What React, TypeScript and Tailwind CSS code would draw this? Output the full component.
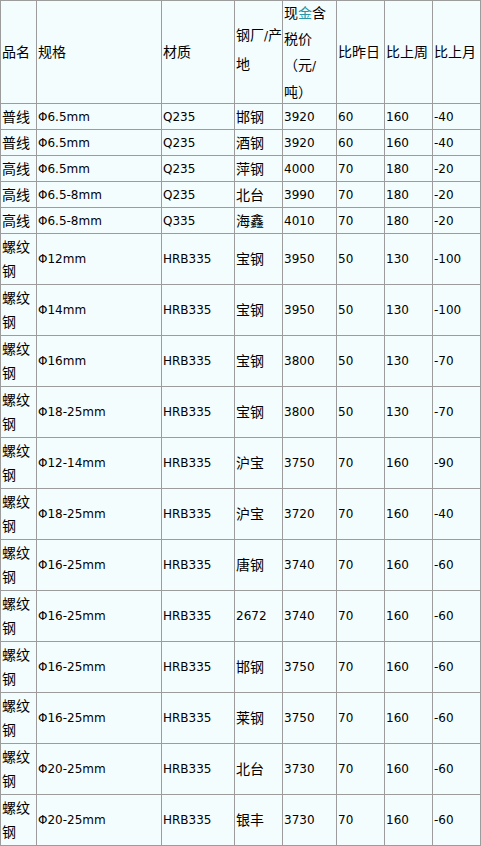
import React from "react";

type Row = string[];

const rows: Row[] = [
  ["普线", "Φ6.5mm", "Q235", "邯钢", "3920", "60", "160", "-40"],
  ["普线", "Φ6.5mm", "Q235", "酒钢", "3920", "60", "160", "-40"],
  ["高线", "Φ6.5mm", "Q235", "萍钢", "4000", "70", "180", "-20"],
  ["高线", "Φ6.5-8mm", "Q235", "北台", "3990", "70", "180", "-20"],
  ["高线", "Φ6.5-8mm", "Q335", "海鑫", "4010", "70", "180", "-20"],
];

const tall: Row[] = [
  ["Φ12mm", "HRB335", "宝钢", "3950", "50", "130", "-100"],
  ["Φ14mm", "HRB335", "宝钢", "3950", "50", "130", "-100"],
  ["Φ16mm", "HRB335", "宝钢", "3800", "50", "130", "-70"],
  ["Φ18-25mm", "HRB335", "宝钢", "3800", "50", "130", "-70"],
  ["Φ12-14mm", "HRB335", "沪宝", "3750", "70", "160", "-90"],
  ["Φ18-25mm", "HRB335", "沪宝", "3720", "70", "160", "-40"],
  ["Φ16-25mm", "HRB335", "唐钢", "3740", "70", "160", "-60"],
  ["Φ16-25mm", "HRB335", "2672", "3740", "70", "160", "-60"],
  ["Φ16-25mm", "HRB335", "邯钢", "3750", "70", "160", "-60"],
  ["Φ16-25mm", "HRB335", "莱钢", "3750", "70", "160", "-60"],
  ["Φ20-25mm", "HRB335", "北台", "3730", "70", "160", "-60"],
  ["Φ20-25mm", "HRB335", "银丰", "3730", "70", "160", "-60"],
];

const cjk = /[\u3000-\u9fff\uff00-\uffef]/;

function T({ s }: { s: string }) {
  const parts: { t: string; c: boolean }[] = [];
  for (const ch of s) {
    const c = cjk.test(ch);
    const last = parts[parts.length - 1];
    if (last && last.c === c) last.t += ch;
    else parts.push({ t: ch, c });
  }
  return (
    <>
      {parts.map((p, i) =>
        p.c ? (
          <span key={i} className="text-[14px]">
            {p.t}
          </span>
        ) : (
          <span key={i} className="text-[12px]">
            {p.t}
          </span>
        )
      )}
    </>
  );
}

const cell =
  "border-r border-b border-[#9c9c9c] flex items-center pl-[1px] overflow-hidden whitespace-nowrap";

export default function App() {
  return (
    <div
      className="w-[481px] bg-[#f4fdfd] text-black"
      style={{ fontFamily: '"DejaVu Sans", "Noto Sans CJK SC", sans-serif' }}
    >
      <div className="grid grid-cols-[36px_125px_73px_48px_54px_48px_48px_48px] border-l border-t border-[#9c9c9c]">
        {/* header */}
        <div className={`${cell} h-[103px] leading-[24px]`}>
          <T s="品名" />
        </div>
        <div className={`${cell} h-[103px] leading-[24px]`}>
          <T s="规格" />
        </div>
        <div className={`${cell} h-[103px] leading-[24px]`}>
          <T s="材质" />
        </div>
        <div className={`${cell} h-[103px] leading-[28px] pb-[6px]`}>
          <div>
            <div>
              <T s="钢厂/产" />
            </div>
            <div>
              <T s="地" />
            </div>
          </div>
        </div>
        <div className={`${cell} h-[103px] leading-[25px]`}>
          <div>
            <div>
              <span className="text-[14px]">现</span>
              <span className="text-[14px] text-[#2b96a8]">金</span>
              <span className="text-[14px]">含</span>
            </div>
            <div>
              <T s="税价" />
            </div>
            <div>
              <T s="（元/" />
            </div>
            <div>
              <T s="吨）" />
            </div>
          </div>
        </div>
        <div className={`${cell} h-[103px] leading-[24px]`}>
          <T s="比昨日" />
        </div>
        <div className={`${cell} h-[103px] leading-[24px]`}>
          <T s="比上周" />
        </div>
        <div className={`${cell} h-[103px] leading-[24px]`}>
          <T s="比上月" />
        </div>

        {rows.map((r, i) => (
          <React.Fragment key={`r${i}`}>
            {r.map((v, j) => (
              <div key={j} className={`${cell} h-[26px] leading-[24px]`}>
                <T s={v} />
              </div>
            ))}
          </React.Fragment>
        ))}

        {tall.map((r, i) => (
          <React.Fragment key={`t${i}`}>
            <div className={`${cell} h-[51px] leading-[23px]`}>
              <div>
                <div>
                  <T s="螺纹" />
                </div>
                <div>
                  <T s="钢" />
                </div>
              </div>
            </div>
            {r.map((v, j) => (
              <div key={j} className={`${cell} h-[51px] leading-[24px]`}>
                <T s={v} />
              </div>
            ))}
          </React.Fragment>
        ))}
      </div>
    </div>
  );
}
